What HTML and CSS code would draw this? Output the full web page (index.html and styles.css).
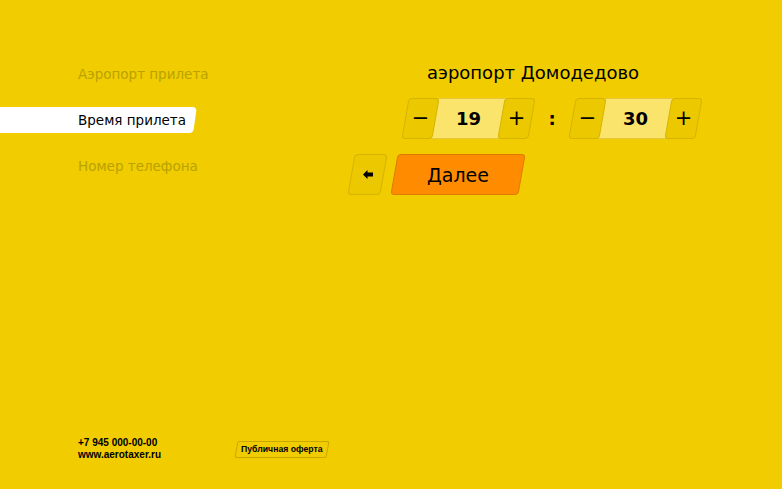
FILE: index.html
```html
<!DOCTYPE html>
<html lang="ru">
<head>
  <meta charset="UTF-8" />
  <title>Аэротакси</title>
  <meta name="viewport" content="width=device-width, initial-scale=1.0" />
  <link rel="stylesheet" href="styles.css">
</head>
<body>

  <div class="layout">
    <!-- Steps -->
    <nav class="steps">
      <div class="step">Аэропорт прилета</div>
      <div class="step active"><span>Время прилета</span></div>
      <div class="step">Номер телефона</div>
    </nav>

    <main class="panel">
      <h1 class="airport">аэропорт Домодедово</h1>

      <div class="time">
        <div class="spinner">
          <button class="spin-btn" type="button"><span>&minus;</span></button>
          <div class="spin-value"><span>19</span></div>
          <button class="spin-btn" type="button"><span>+</span></button>
        </div>
        <div class="colon">:</div>
        <div class="spinner">
          <button class="spin-btn" type="button"><span>&minus;</span></button>
          <div class="spin-value"><span>30</span></div>
          <button class="spin-btn" type="button"><span>+</span></button>
        </div>
      </div>

      <div class="actions">
        <button class="back" type="button">
          <span>
            <svg width="10" height="9" viewBox="0 0 10 9">
              <path d="M0 4.5 L4.5 0 L4.5 2.5 L10 2.5 L10 6.5 L4.5 6.5 L4.5 9 Z" fill="#000"/>
            </svg>
          </span>
        </button>
        <button class="next" type="button"><span>Далее</span></button>
      </div>
    </main>
  </div>

  <footer>
    <div class="contacts">
      <div>+7 945 000-00-00</div>
      <div>www.aerotaxer.ru</div>
    </div>
    <a class="offer" href="#"><span>Публичная оферта</span></a>
  </footer>

</body>
</html>
```

FILE: styles.css
```css
html, body {
  margin: 0;
  padding: 0;
  height: 100%;
  overflow: hidden;
}

body {
  background: #f0cc00;
  font-family: 'DejaVu Sans', Verdana, sans-serif;
  color: #000;
  display: flex;
  flex-direction: column;
}

.layout {
  flex: 1;
  display: flex;
}

/* Left steps */
.steps {
  width: 197px;
  flex-shrink: 0;
  padding-top: 61px;
  display: flex;
  flex-direction: column;
  gap: 20px;
}

.step {
  height: 26px;
  line-height: 26px;
  padding-left: 78px;
  font-size: 13.5px;
  color: #b9a200;
  white-space: nowrap;
  position: relative;
}

.step.active {
  color: #000;
}

.step.active::before {
  content: "";
  position: absolute;
  top: 0;
  bottom: 0;
  left: -10px;
  right: 2px;
  background: #fff;
  border-radius: 0 4px 4px 0;
  transform: skewX(-8deg);
}

.step.active span {
  position: relative;
}

/* Right panel */
.panel {
  margin-left: 151px;
  padding-top: 58px;
}

.airport {
  margin: 0 0 0 79px;
  font-size: 18px;
  font-weight: normal;
  line-height: 30px;
  white-space: nowrap;
}

.time {
  margin: 10px 0 0 57px;
  display: flex;
  align-items: center;
}

.spinner {
  display: flex;
  height: 41px;
}

.spin-btn,
.spin-value,
.back,
.next,
.offer {
  transform: skewX(-10deg);
  box-sizing: border-box;
}

.spin-btn > span,
.spin-value > span,
.back > span,
.next > span,
.offer > span {
  display: block;
  transform: skewX(10deg);
}

.spin-btn {
  width: 31px;
  height: 41px;
  padding: 0;
  background: #ecc800;
  border: 1px solid #d6b400;
  border-radius: 4px;
  font-family: 'DejaVu Sans', Verdana, sans-serif;
  font-size: 21px;
  line-height: 37px;
  color: #000;
  position: relative;
  z-index: 1;
}

.spin-value {
  width: 69px;
  margin: 0 -2px;
  background: #fbe46c;
  border-top: 1px solid #e6c83e;
  border-bottom: 1px solid #e6c83e;
  font-size: 18px;
  font-weight: bold;
  line-height: 39px;
  text-align: center;
}

.colon {
  width: 40px;
  text-align: center;
  font-size: 18px;
  font-weight: bold;
}

.actions {
  margin-top: 15px;
  display: flex;
  gap: 10px;
}

.back {
  width: 33px;
  height: 41px;
  padding: 0;
  margin-left: 3px;
  background: #ecc800;
  border: 1px solid #d6b400;
  border-radius: 4px;
}

.back svg {
  display: block;
  margin: 0 auto;
}

.next {
  width: 128px;
  height: 41px;
  padding: 0;
  background: #ff8c00;
  border: 1px solid #de7a00;
  border-radius: 4px;
  font-family: 'DejaVu Sans', Verdana, sans-serif;
  font-size: 19px;
  color: #000;
}

/* Footer */
footer {
  display: flex;
  align-items: center;
  padding: 0 0 28px 78px;
  font-family: 'Liberation Sans', Arial, sans-serif;
  font-size: 10px;
  font-weight: bold;
}

.contacts {
  width: 158px;
  line-height: 12px;
}

.offer {
  display: block;
  height: 17px;
  padding: 0 4px;
  border: 1px solid #c9a900;
  border-radius: 2px;
  color: #000;
  text-decoration: none;
  line-height: 15px;
  font-size: 8.7px;
}
```
